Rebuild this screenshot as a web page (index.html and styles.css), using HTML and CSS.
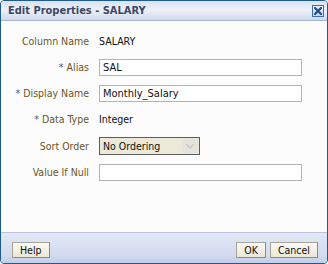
FILE: index.html
```html
<!DOCTYPE html>
<html lang="en">
<head>
  <meta charset="UTF-8">
  <title>Edit Properties - SALARY</title>
  <link rel="stylesheet" href="styles.css">
</head>
<body>

  <div class="dialog">
    <div class="titlebar">
      <span class="title">Edit Properties - SALARY</span>
      <span class="close-btn">
        <svg width="8" height="8" viewBox="0 0 8 8">
          <path d="M1 1 L7 7 M7 1 L1 7" stroke="#1f4f8c" stroke-width="2.2" stroke-linecap="square"/>
        </svg>
      </span>
    </div>

    <div class="content">
      <div class="form">
        <label>Column Name</label>
        <span class="value">SALARY</span>

        <label><span class="req">*</span> Alias</label>
        <input type="text" class="field" value="SAL">

        <label><span class="req">*</span> Display Name</label>
        <input type="text" class="field" value="Monthly_Salary">

        <label><span class="req">*</span> Data Type</label>
        <span class="value">Integer</span>

        <label>Sort Order</label>
        <div class="select">
          <span class="select-text">No Ordering</span>
          <span class="select-arrow">
            <svg width="10" height="6" viewBox="0 0 10 6">
              <path d="M1 1 L5 5 L9 1" fill="none" stroke="#c9c9c4" stroke-width="1.6"/>
            </svg>
          </span>
        </div>

        <label>Value If Null</label>
        <input type="text" class="field" value="">
      </div>
    </div>

    <div class="footer">
      <button class="btn">Help</button>
      <div class="footer-right">
        <button class="btn">OK</button>
        <button class="btn">Cancel</button>
      </div>
    </div>
  </div>

</body>
</html>
```

FILE: styles.css
```css
body {
  margin: 0;
  background-color: #ffffff;
  font-family: "DejaVu Sans Condensed", "DejaVu Sans", sans-serif;
  font-stretch: condensed;
  font-size: 10.5px;
}

.dialog {
  width: 328px;
  height: 264px;
  box-sizing: border-box;
  border: 1px solid #1e5c8e;
  border-radius: 4px;
  display: flex;
  flex-direction: column;
  overflow: hidden;
  background-color: #fcfcfc;
}

.titlebar {
  height: 19px;
  display: flex;
  align-items: center;
  justify-content: space-between;
  padding: 0 3px 0 7px;
  background: linear-gradient(#d9e0f2, #eef1f9 45%, #d0d9ee);
  border-bottom: 1px solid #a8b6d6;
}

.title {
  font-weight: bold;
  font-size: 11px;
  color: #3b4866;
}

.close-btn {
  width: 12px;
  height: 12px;
  box-sizing: border-box;
  border: 1px solid #3f6fa6;
  background: linear-gradient(#eef3fb, #c7d6ee);
  display: flex;
  align-items: center;
  justify-content: center;
}

.content {
  flex: 1;
  padding-top: 12px;
}

.form {
  display: grid;
  grid-template-columns: 88px 203px;
  column-gap: 10px;
  row-gap: 9px;
  align-items: center;
}

.form label {
  text-align: right;
  color: #6b561f;
  line-height: 17px;
}

.req {
  color: #3d5a8c;
}

.value {
  color: #111;
  line-height: 17px;
}

.field {
  height: 17px;
  box-sizing: border-box;
  margin: 0;
  padding: 0 3px;
  border: 1px solid #b3b3b3;
  background-color: #ffffff;
  font-family: inherit;
  font-stretch: condensed;
  font-size: 11px;
  line-height: 15px;
  color: #111;
  outline: none;
}

.select {
  width: 101px;
  height: 18px;
  box-sizing: border-box;
  border: 1px solid #5c5c5c;
  background-color: #ece9d8;
  display: flex;
  align-items: center;
  justify-content: space-between;
}

.select-text {
  padding-left: 3px;
  color: #111;
}

.select-arrow {
  width: 16px;
  height: 14px;
  margin-right: 1px;
  background-color: #e4e3dd;
  display: flex;
  align-items: center;
  justify-content: center;
}

.footer {
  height: 31px;
  box-sizing: border-box;
  border-top: 1px solid #b9c5e0;
  background: linear-gradient(#e1e7f6, #d4dcf0 70%, #c4cee8);
  display: flex;
  justify-content: space-between;
  align-items: flex-start;
  padding: 9px 9px 0 11px;
}

.footer-right {
  display: flex;
  gap: 4px;
}

.btn {
  height: 16px;
  box-sizing: border-box;
  margin: 0;
  padding: 0 7px;
  border: 1px solid #a7a59a;
  border-right-color: #8c8a80;
  border-bottom-color: #8c8a80;
  background: linear-gradient(#fbfaf4, #ebe7d6);
  font-family: inherit;
  font-stretch: condensed;
  font-size: 10.5px;
  color: #111;
  line-height: 14px;
}
```
